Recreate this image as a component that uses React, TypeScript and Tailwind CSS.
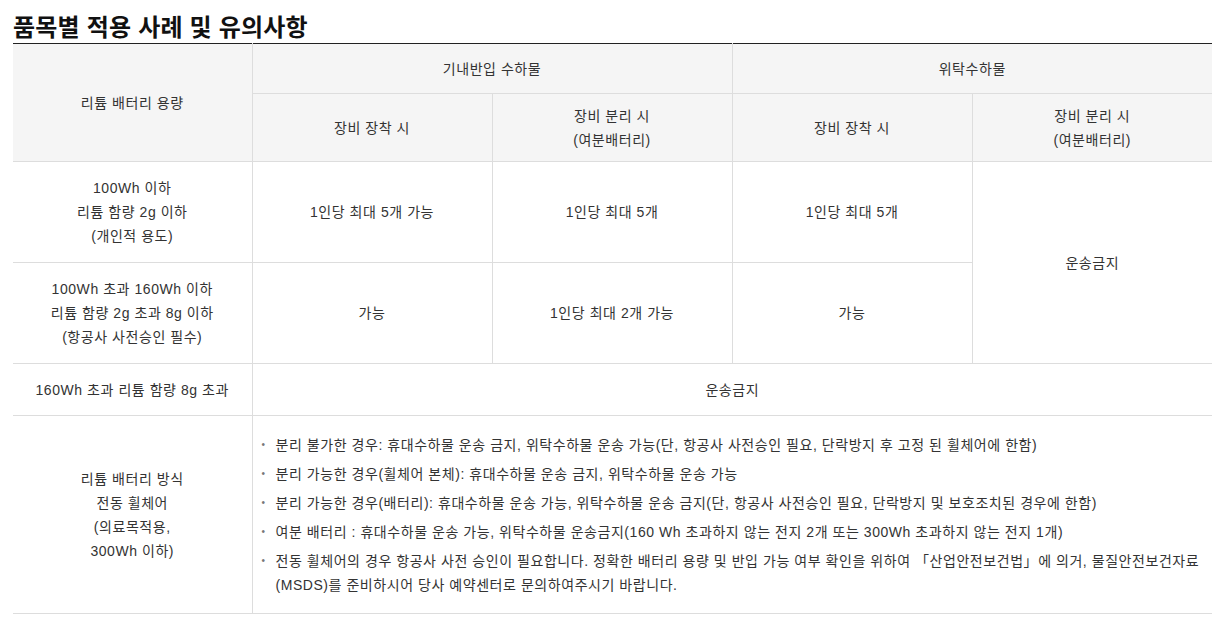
import React from "react"

const cell = "border border-[#dddddd] text-center align-middle px-2"
const head = "border border-[#dddddd] bg-[#f5f5f5] text-center align-middle px-2 font-normal"

const notes = [
    "분리 불가한 경우: 휴대수하물 운송 금지, 위탁수하물 운송 가능(단, 항공사 사전승인 필요, 단락방지 후 고정 된 휠체어에 한함)",
    "분리 가능한 경우(휠체어 본체): 휴대수하물 운송 금지, 위탁수하물 운송 가능",
    "분리 가능한 경우(배터리): 휴대수하물 운송 가능, 위탁수하물 운송 금지(단, 항공사 사전승인 필요, 단락방지 및 보호조치된 경우에 한함)",
    "여분 배터리 : 휴대수하물 운송 가능, 위탁수하물 운송금지(160 Wh 초과하지 않는 전지 2개 또는 300Wh 초과하지 않는 전지 1개)",
    "전동 휠체어의 경우 항공사 사전 승인이 필요합니다. 정확한 배터리 용량 및 반입 가능 여부 확인을 위하여 「산업안전보건법」에 의거, 물질안전보건자료 (MSDS)를 준비하시어 당사 예약센터로 문의하여주시기 바랍니다.",
]

export default function App() {
    return (
        <div className="w-[1225px] h-[628px] bg-white px-[13px] pt-[12px] text-[#333] font-['Liberation_Sans','Noto_Sans_CJK_KR',sans-serif]">
            <h2 className="text-[24px] leading-[31px] font-bold text-[#111] tracking-[0.2px]">품목별 적용 사례 및 유의사항</h2>
            <table className="w-[1199px] table-fixed border-collapse border-t border-t-[#222] text-[14px] leading-[24px] tracking-[0.55px]">
                <colgroup>
                    <col className="w-[239px]"/>
                    <col className="w-[240px]"/>
                    <col className="w-[240px]"/>
                    <col className="w-[240px]"/>
                    <col className="w-[240px]"/>
                </colgroup>
                <thead>
                    <tr className="h-[50px]">
                        <th rowSpan={2} className={head + " border-l-0 border-t-[#222]"}>리튬 배터리 용량</th>
                        <th colSpan={2} className={head + " border-t-[#222]"}>기내반입 수하물</th>
                        <th colSpan={2} className={head + " border-r-0 border-t-[#222]"}>위탁수하물</th>
                    </tr>
                    <tr className="h-[68px]">
                        <th className={head}>장비 장착 시</th>
                        <th className={head}>장비 분리 시<br/>(여분배터리)</th>
                        <th className={head}>장비 장착 시</th>
                        <th className={head + " border-r-0"}>장비 분리 시<br/>(여분배터리)</th>
                    </tr>
                </thead>
                <tbody>
                    <tr className="h-[101px]">
                        <td className={cell + " border-l-0"}>100Wh 이하<br/>리튬 함량 2g 이하<br/>(개인적 용도)</td>
                        <td className={cell}>1인당 최대 5개 가능</td>
                        <td className={cell}>1인당 최대 5개</td>
                        <td className={cell}>1인당 최대 5개</td>
                        <td rowSpan={2} className={cell + " border-r-0"}>운송금지</td>
                    </tr>
                    <tr className="h-[101px]">
                        <td className={cell + " border-l-0"}>100Wh 초과 160Wh 이하<br/>리튬 함량 2g 초과 8g 이하<br/>(항공사 사전승인 필수)</td>
                        <td className={cell}>가능</td>
                        <td className={cell}>1인당 최대 2개 가능</td>
                        <td className={cell}>가능</td>
                    </tr>
                    <tr className="h-[52px]">
                        <td className={cell + " border-l-0"}>160Wh 초과 리튬 함량 8g 초과</td>
                        <td colSpan={4} className={cell + " border-r-0"}>운송금지</td>
                    </tr>
                    <tr className="h-[198px]">
                        <td className={cell + " border-l-0"}>리튬 배터리 방식<br/>전동 휠체어<br/>(의료목적용,<br/>300Wh 이하)</td>
                        <td colSpan={4} className={cell + " border-r-0 text-left pl-[9px] pr-0"}>
                            <ul className="flex flex-col gap-[5px]">
                                {notes.map((note, i) => (
                                    <li key={i} className="flex">
                                        <span className="w-[14px] shrink-0 text-[10px] text-[#777]">•</span>
                                        <span>{note}</span>
                                    </li>
                                ))}
                            </ul>
                        </td>
                    </tr>
                </tbody>
            </table>
        </div>
    )
}
